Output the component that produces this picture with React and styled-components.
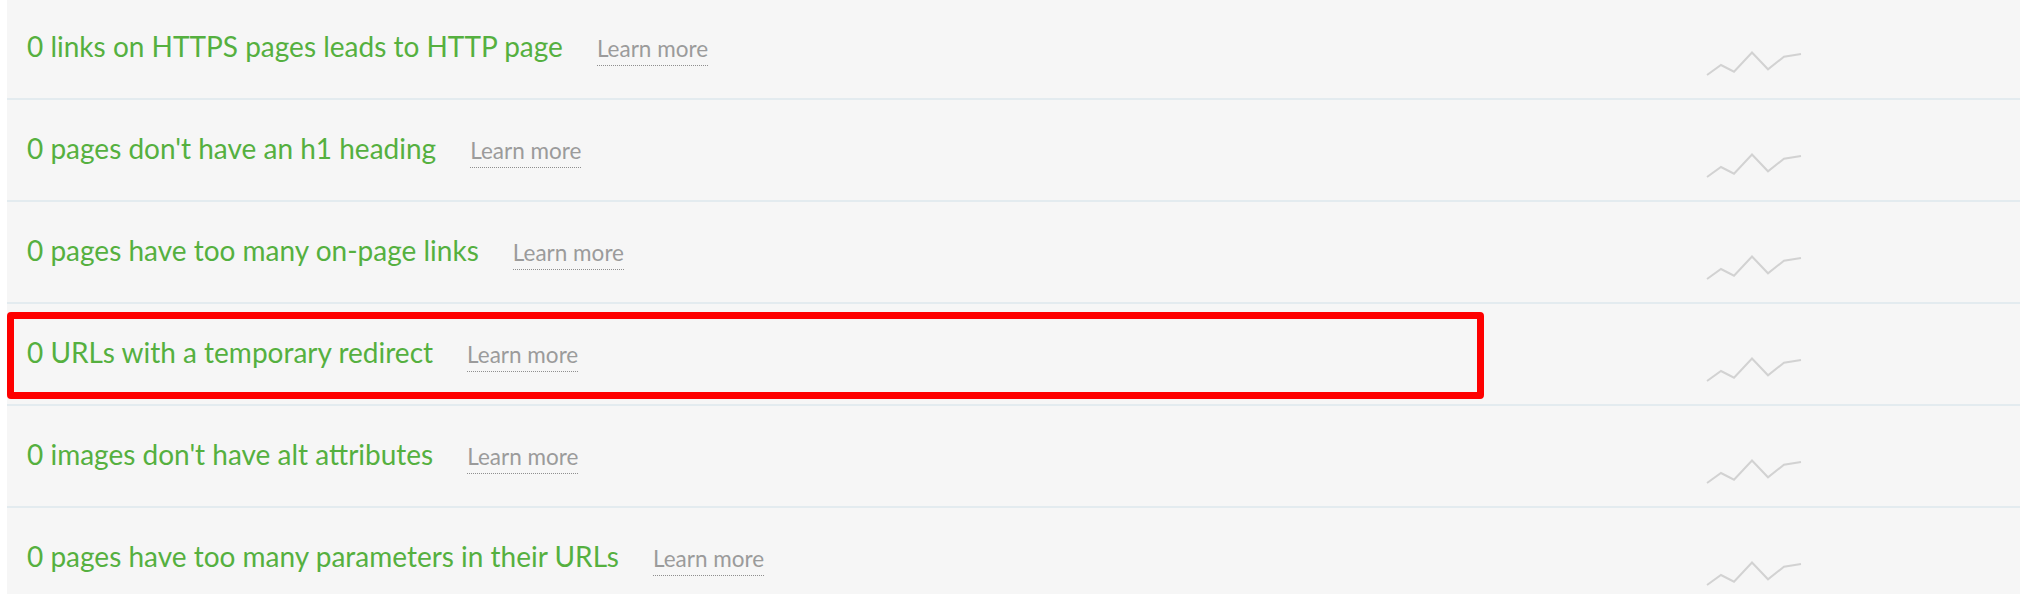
import React from "react";
import styled, { createGlobalStyle } from "styled-components";

const GlobalStyle = createGlobalStyle`
  html, body {
    margin: 0;
    padding: 0;
    background: #ffffff;
    font-family: "Lato", "Open Sans", sans-serif;
  }
`;

const Page = styled.div`
  height: 594px;
  overflow: hidden;
  padding-left: 7px;
  background: #ffffff;
`;

const List = styled.div`
  margin-top: -2px;
  background: #f6f6f6;
`;

const Row = styled.div`
  position: relative;
  display: flex;
  align-items: center;
  height: 100px;
  border-bottom: 2px solid #e3ebef;
`;

const Info = styled.div`
  flex: 0 0 1699px;
  box-sizing: border-box;
  padding-left: 20px;
  display: flex;
  align-items: baseline;
  gap: 34px;
`;

const Title = styled.span`
  color: #55b03f;
  font-size: 28px;
  line-height: 1.2;
`;

const LearnMore = styled.a`
  color: #9b9b9b;
  font-size: 22.5px;
  line-height: 1.2;
  text-decoration: none;
  padding-bottom: 3px;
  border-bottom: 1px dotted #8f8f8f;
  cursor: pointer;
`;

const Trend = styled.svg`
  align-self: flex-start;
  margin-top: 53px;
  flex: none;
`;

const Highlight = styled.div`
  position: absolute;
  left: 0;
  top: 8px;
  width: 1477px;
  height: 87px;
  box-sizing: border-box;
  border: 7px solid #fe0000;
  border-radius: 4px;
  pointer-events: none;
`;

const issues = [
  "0 links on HTTPS pages leads to HTTP page",
  "0 pages don't have an h1 heading",
  "0 pages have too many on-page links",
  "0 URLs with a temporary redirect",
  "0 images don't have alt attributes",
  "0 pages have too many parameters in their URLs",
];

const Sparkline = () => (
  <Trend width="96" height="26" viewBox="-1 -1 96 26">
    <polyline
      points="0,23 14,13 27,19.7 45,0.5 61,17.3 77,4.7 94,2"
      fill="none"
      stroke="#d2d2d2"
      strokeWidth="2"
      strokeLinejoin="miter"
    />
  </Trend>
);

export default function App() {
  return (
    <>
      <GlobalStyle />
      <Page>
        <List>
          {issues.map((text, i) => (
            <Row key={text}>
              <Info>
                <Title>{text}</Title>
                <LearnMore>Learn more</LearnMore>
              </Info>
              <Sparkline />
              {i === 3 && <Highlight />}
            </Row>
          ))}
        </List>
      </Page>
    </>
  );
}
